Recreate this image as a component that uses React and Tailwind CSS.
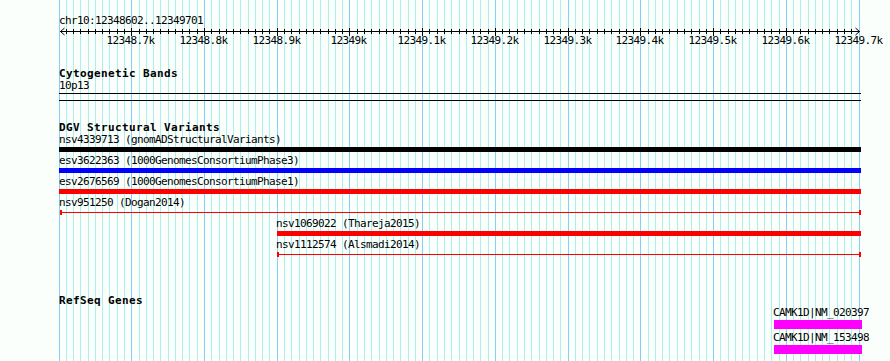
import React from "react";

const X0 = 59;
const STEP = 800 / 110;
const gx = (i) => Math.floor(X0 + i * STEP);
const ticks = Array.from({ length: 111 }, (_, i) => i);

const variants = [
    { label: "nsv4339713 (gnomADStructuralVariants)", left: 59, right: 861, type: "bar", color: "bg-black", textLeft: 59 },
    { label: "esv3622363 (1000GenomesConsortiumPhase3)", left: 59, right: 861, type: "bar", color: "bg-[#0000ff]", textLeft: 59 },
    { label: "esv2676569 (1000GenomesConsortiumPhase1)", left: 59, right: 861, type: "bar", color: "bg-[#ff0000]", textLeft: 59 },
    { label: "nsv951250 (Dogan2014)", left: 60, right: 861, type: "line", textLeft: 59 },
    { label: "nsv1069022 (Thareja2015)", left: 277, right: 861, type: "bar", color: "bg-[#ff0000]", textLeft: 276 },
    { label: "nsv1112574 (Alsmadi2014)", left: 277, right: 861, type: "line", textLeft: 276 },
];

const genes = [
    { label: "CAMK1D|NM_020397", left: 774, right: 862 },
    { label: "CAMK1D|NM_153498", left: 774, right: 862 },
];

// grid lines behind all the tracks
const Grid = () => (
    <svg className="absolute inset-0" width="890" height="361">
        {ticks.map((i) => (
            <line
                key={i}
                x1={gx(i) + 0.5}
                x2={gx(i) + 0.5}
                y1="0"
                y2="361"
                stroke={i % 10 === 0 ? "#87cefa" : "#afeeee"}
                strokeWidth="1"
            />
        ))}
    </svg>
);

const Ruler = () => (
    <svg className="block" width="890" height="22">
        <line x1="60" x2="860" y1="4.5" y2="4.5" stroke="#000" />
        <polyline points="64.5,1 60.5,4.5 64.5,8" fill="none" stroke="#000" />
        <polyline points="855.5,1 859.5,4.5 855.5,8" fill="none" stroke="#000" />
        {ticks.slice(1, 110).map((i) => (
            <line
                key={i}
                x1={gx(i) + 0.5}
                x2={gx(i) + 0.5}
                y1={i % 10 === 0 ? 1 : 2}
                y2={i % 10 === 0 ? 9 : 7}
                stroke="#000"
            />
        ))}
        {ticks
            .filter((i) => i % 10 === 0 && i > 0)
            .map((i) => (
                <text
                    key={i}
                    x={gx(i) - 0.5}
                    y="17"
                    textAnchor="middle"
                    fontFamily="DejaVu Sans Mono, monospace"
                    fontSize="11"
                    letterSpacing="-0.62"
                    fill="#000"
                >
                    {Math.round((12348600 + i * 10) / 100) / 10}k
                </text>
            ))}
    </svg>
);

const TrackTitle = ({ children, className = "" }) => (
    <div className={`pl-[59px] h-[12px] text-[11px] tracking-[0.38px] leading-[12px] font-bold text-black ${className}`}>
        {children}
    </div>
);

const VariantRow = ({ row }) => (
    <div className="h-[21px] flex flex-col">
        <div className="h-[12px] leading-[12px] whitespace-nowrap" style={{ paddingLeft: row.textLeft }}>
            {row.label}
        </div>
        {row.type === "bar" ? (
            <div className="mt-[1px] h-[5px] flex">
                <div className={`h-full ${row.color}`} style={{ marginLeft: row.left, width: row.right - row.left }} />
            </div>
        ) : (
            <div className="mt-[1px] h-[5px] flex">
                <div className="relative h-full" style={{ marginLeft: row.left, width: row.right - row.left }}>
                    <div className="absolute left-0 right-0 top-[2px] h-px bg-[#ff0000]" />
                    <div className="absolute left-0 top-0 w-[2px] h-[5px] bg-[#ff0000]" />
                    <div className="absolute right-0 top-0 w-[2px] h-[5px] bg-[#ff0000]" />
                </div>
            </div>
        )}
    </div>
);

const GeneRow = ({ gene }) => (
    <div className="h-[25px] flex flex-col">
        <div className="h-[12px] leading-[12px] whitespace-nowrap" style={{ paddingLeft: gene.left - 1 }}>
            {gene.label}
        </div>
        <div className="mt-[1px] h-[9px] flex">
            <div className="h-full bg-[#ff00ff]" style={{ marginLeft: gene.left, width: gene.right - gene.left }} />
        </div>
    </div>
);

export default function App() {
    return (
        <div className="relative w-[890px] h-[361px] overflow-hidden bg-[#fbfffb] text-black text-[11px] tracking-[-0.62px] font-['DejaVu_Sans_Mono',monospace]">
            <Grid />

            <div className="relative flex flex-col pt-[15px]">
                {/* ruler */}
                <div className="pl-[59px] h-[12px] leading-[12px]">chr10:12348602..12349701</div>
                <Ruler />

                {/* cytogenetic bands */}
                <TrackTitle className="mt-[19px]">Cytogenetic Bands</TrackTitle>
                <div className="pl-[59px] h-[12px] leading-[12px]">10p13</div>
                <div className="mt-[1px] ml-[59px] w-[802px] h-[8px] border-y border-black" />

                {/* DGV */}
                <TrackTitle className="mt-[21px]">DGV Structural Variants</TrackTitle>
                {variants.map((row) => (
                    <VariantRow key={row.label} row={row} />
                ))}

                {/* RefSeq */}
                <TrackTitle className="mt-[35px]">RefSeq Genes</TrackTitle>
                {genes.map((gene) => (
                    <GeneRow key={gene.label} gene={gene} />
                ))}
            </div>
        </div>
    );
}
